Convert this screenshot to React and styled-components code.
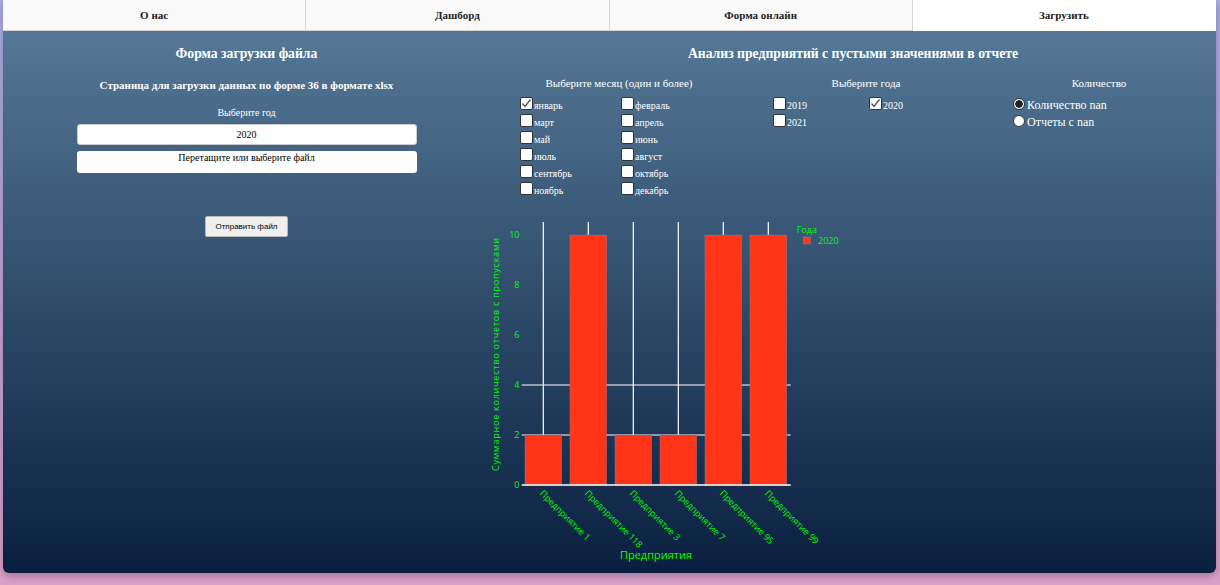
import React, { useState } from "react";
import styled, { createGlobalStyle } from "styled-components";

const GlobalStyle = createGlobalStyle`
  html, body {
    margin: 0;
    height: 100%;
    overflow: hidden;
  }
  body {
    background: linear-gradient(to bottom, #a9afe6, #dba2c9);
    font-family: "Liberation Serif", "Times New Roman", serif;
  }
`;

const TABS = ["О нас", "Дашборд", "Форма онлайн", "Загрузить"];
const MONTHS = [
  ["январь", true],
  ["февраль", false],
  ["март", false],
  ["апрель", false],
  ["май", false],
  ["июнь", false],
  ["июль", false],
  ["август", false],
  ["сентябрь", false],
  ["октябрь", false],
  ["ноябрь", false],
  ["декабрь", false],
];
const YEARS = [
  ["2019", false],
  ["2020", true],
  ["2021", false],
];
const BARS = [
  { name: "Предприятие 1", value: 2 },
  { name: "Предприятие 118", value: 10 },
  { name: "Предприятие 3", value: 2 },
  { name: "Предприятие 7", value: 2 },
  { name: "Предприятие 95", value: 10 },
  { name: "Предприятие 99", value: 10 },
];

function Check({ label, checked }) {
  return (
    <Option>
      <Box>
        {checked && (
          <svg width="11" height="11" viewBox="0 0 11 11">
            <polyline
              points="1.5,5.5 4,8.5 9.5,1.5"
              fill="none"
              stroke="#555"
              strokeWidth="1.4"
            />
          </svg>
        )}
      </Box>
      <span>{label}</span>
    </Option>
  );
}

function Radio({ label, checked }) {
  return (
    <Option $radio>
      <Circle $checked={checked} />
      <span>{label}</span>
    </Option>
  );
}

function Chart() {
  const base = 272;
  const unit = 25;
  const left = 31.7;
  const right = 300.7;
  const y = (v) => base - v * unit;
  const cx = (i) => 53.3 + i * 45;
  const green = "#00ff00";
  const font = '"Open Sans", Verdana, sans-serif';

  return (
    <ChartSvg width="360" height="360" viewBox="0 0 360 360">
      {BARS.map((b, i) => (
        <line key={"v" + i} x1={cx(i)} x2={cx(i)} y1="9" y2={base} stroke="#fff" strokeWidth="1.2" />
      ))}
      {[2, 4].map((v) => (
        <line key={"h" + v} x1={left} x2={right} y1={y(v)} y2={y(v)} stroke="#fff" strokeWidth="1.2" />
      ))}
      {BARS.map((b, i) => (
        <rect
          key={"b" + i}
          x={cx(i) - 18.3}
          y={y(b.value)}
          width="36.6"
          height={b.value * unit}
          fill="#ff3419"
          stroke="rgba(150,130,150,0.7)"
          strokeWidth="0.6"
        />
      ))}
      <line x1={left} x2={right} y1={base} y2={base} stroke="#fff" strokeWidth="1.4" />
      {[0, 2, 4, 6, 8, 10].map((v) => (
        <text key={"t" + v} x="29.5" y={y(v) + 3} fill={green} fontSize="9" fontFamily={font} textAnchor="end">
          {v}
        </text>
      ))}
      {BARS.map((b, i) => (
        <text
          key={"x" + i}
          x={cx(i) - 4}
          y="281"
          fill={green}
          fontSize="9"
          fontFamily={font}
          transform={`rotate(45 ${cx(i) - 4} 281)`}
        >
          {b.name}
        </text>
      ))}
      <text
        x="8.5"
        y="141.5"
        fill={green}
        fontSize="9"
        fontFamily={font}
        textAnchor="middle"
        textLength="233"
        lengthAdjust="spacing"
        transform="rotate(-90 8.5 141.5)"
      >
        Суммарное количество отчетов с пропусками
      </text>
      <text x="166" y="346" fill={green} fontSize="11" fontFamily={font} textAnchor="middle">
        Предприятия
      </text>
      <text x="306.7" y="19.5" fill={green} fontSize="9" fontFamily={font}>
        Года
      </text>
      <rect x="313.3" y="24" width="7" height="7" fill="#ff3419" stroke="rgba(150,130,150,0.7)" strokeWidth="0.6" />
      <text x="328" y="30.5" fill={green} fontSize="9" fontFamily={font}>
        2020
      </text>
    </ChartSvg>
  );
}

export default function App() {
  const [tab, setTab] = useState(3);

  return (
    <>
      <GlobalStyle />
      <Shell>
        <TabBar>
          {TABS.map((t, i) => (
            <Tab key={t} $active={tab === i} onClick={() => setTab(i)}>
              {t}
            </Tab>
          ))}
        </TabBar>
        <Content>
          <UploadColumn>
            <Title>Форма загрузки файла</Title>
            <Subtitle>Страница для загрузки данных по форме 36 в формате xlsx</Subtitle>
            <SmallLabel>Выберите год</SmallLabel>
            <YearInput defaultValue="2020" />
            <DropZone>Перетащите или выберите файл</DropZone>
            <SendButton>Отправить файл</SendButton>
          </UploadColumn>
          <AnalysisColumn>
            <Title>Анализ предприятий с пустыми значениями в отчете</Title>
            <Controls>
              <Group $width={198}>
                <GroupLabel>Выберите месяц (один и более)</GroupLabel>
                <OptionGrid $col={101}>
                  {MONTHS.map(([m, c]) => (
                    <Check key={m} label={m} checked={c} />
                  ))}
                </OptionGrid>
              </Group>
              <Group $width={186} $gap={55}>
                <GroupLabel>Выберите года</GroupLabel>
                <OptionGrid $col={96}>
                  {YEARS.map(([y, c]) => (
                    <Check key={y} label={y} checked={c} />
                  ))}
                </OptionGrid>
              </Group>
              <Group $width={172} $gap={54}>
                <GroupLabel>Количество</GroupLabel>
                <OptionList>
                  <Radio label="Количество nan" checked />
                  <Radio label="Отчеты с nan" />
                </OptionList>
              </Group>
            </Controls>
            <Chart />
          </AnalysisColumn>
        </Content>
      </Shell>
    </>
  );
}

const Shell = styled.div`
  margin: 0 4px 0 3px;
  height: 573px;
  display: flex;
  flex-direction: column;
  border-radius: 0 0 6px 6px;
  overflow: hidden;
  box-shadow: 0 3px 8px rgba(60, 20, 60, 0.35);
`;

const TabBar = styled.div`
  display: flex;
  height: 31px;
  flex-shrink: 0;
`;

const Tab = styled.div`
  flex: 1;
  display: flex;
  align-items: center;
  justify-content: center;
  box-sizing: border-box;
  background: ${(p) => (p.$active ? "#ffffff" : "#f9f9f9")};
  border-right: 1px solid ${(p) => (p.$active ? "transparent" : "#d6d6d6")};
  border-bottom: 1px solid ${(p) => (p.$active ? "#ffffff" : "#d6d6d6")};
  font-weight: bold;
  font-size: 11px;
  color: #222;
  cursor: pointer;
`;

const Content = styled.div`
  flex: 1;
  display: flex;
  background: linear-gradient(to bottom, #547896, #0a1f3f);
  color: #ffffff;
`;

const UploadColumn = styled.div`
  width: 487px;
  display: flex;
  flex-direction: column;
  align-items: center;
  padding-top: 15px;
`;

const AnalysisColumn = styled.div`
  flex: 1;
  display: flex;
  flex-direction: column;
  padding-top: 15px;
`;

const Title = styled.div`
  font-size: ${(p) => (p.$small ? "13.5px" : "13.7px")};
  font-weight: bold;
  line-height: 16px;
  text-align: center;
`;

const Subtitle = styled.div`
  margin-top: 16px;
  font-size: 11px;
  font-weight: bold;
  line-height: 14px;
`;

const SmallLabel = styled.div`
  margin-top: 15px;
  font-size: 10px;
  line-height: 12px;
`;

const YearInput = styled.input`
  margin-top: 5px;
  width: 340px;
  height: 21px;
  box-sizing: border-box;
  border: 1px solid #ccc;
  border-radius: 3px;
  background: #fff;
  text-align: center;
  font-family: "Liberation Serif", serif;
  font-size: 10px;
  color: #000;
  outline: none;
`;

const DropZone = styled.div`
  margin-top: 6px;
  width: 340px;
  height: 22px;
  box-sizing: border-box;
  padding-top: 1px;
  border-radius: 3px;
  background: #fff;
  color: #000;
  text-align: center;
  font-size: 10px;
  line-height: 12px;
`;

const SendButton = styled.button`
  margin-top: 43px;
  width: 83px;
  height: 21px;
  background: #efefef;
  border: 1px solid #b8b8b8;
  border-radius: 2px;
  font-family: "Liberation Sans", Arial, sans-serif;
  font-size: 8px;
  color: #000;
  padding: 0;
`;

const Controls = styled.div`
  display: flex;
  margin-top: 15px;
  padding-left: 30px;
`;

const Group = styled.div`
  width: ${(p) => p.$width}px;
  margin-left: ${(p) => p.$gap || 0}px;
  display: flex;
  flex-direction: column;
`;

const GroupLabel = styled.div`
  text-align: center;
  font-size: 11px;
  line-height: 13px;
  white-space: nowrap;
`;

const OptionGrid = styled.div`
  margin-top: 5px;
  display: grid;
  grid-template-columns: ${(p) => p.$col}px ${(p) => p.$col}px;
  grid-auto-rows: 17px;
`;

const OptionList = styled.div`
  margin-top: 5px;
  display: flex;
  flex-direction: column;
  & > * {
    height: 17px;
  }
`;

const Option = styled.label`
  display: flex;
  align-items: center;
  gap: ${(p) => (p.$radio ? "2px" : "1px")};
  font-size: ${(p) => (p.$radio ? "12px" : "10px")};
  white-space: nowrap;
  span {
    padding-top: 3px;
  }
`;

const Box = styled.span`
  width: 13px;
  height: 13px;
  box-sizing: border-box;
  border: 1px solid #333;
  border-radius: 2px;
  background: #fff;
  display: flex;
  align-items: center;
  justify-content: center;
  flex-shrink: 0;
  && {
    padding: 0;
  }
`;

const Circle = styled.span`
  width: 12px;
  height: 12px;
  box-sizing: border-box;
  border-radius: 50%;
  border: 1px solid #333;
  background: ${(p) =>
    p.$checked ? "radial-gradient(circle, #222 0 3.5px, #fff 4px)" : "#fff"};
  flex-shrink: 0;
  && {
    padding: 0;
  }
`;

const ChartSvg = styled.svg`
  display: block;
  margin-top: 16px;
`;
